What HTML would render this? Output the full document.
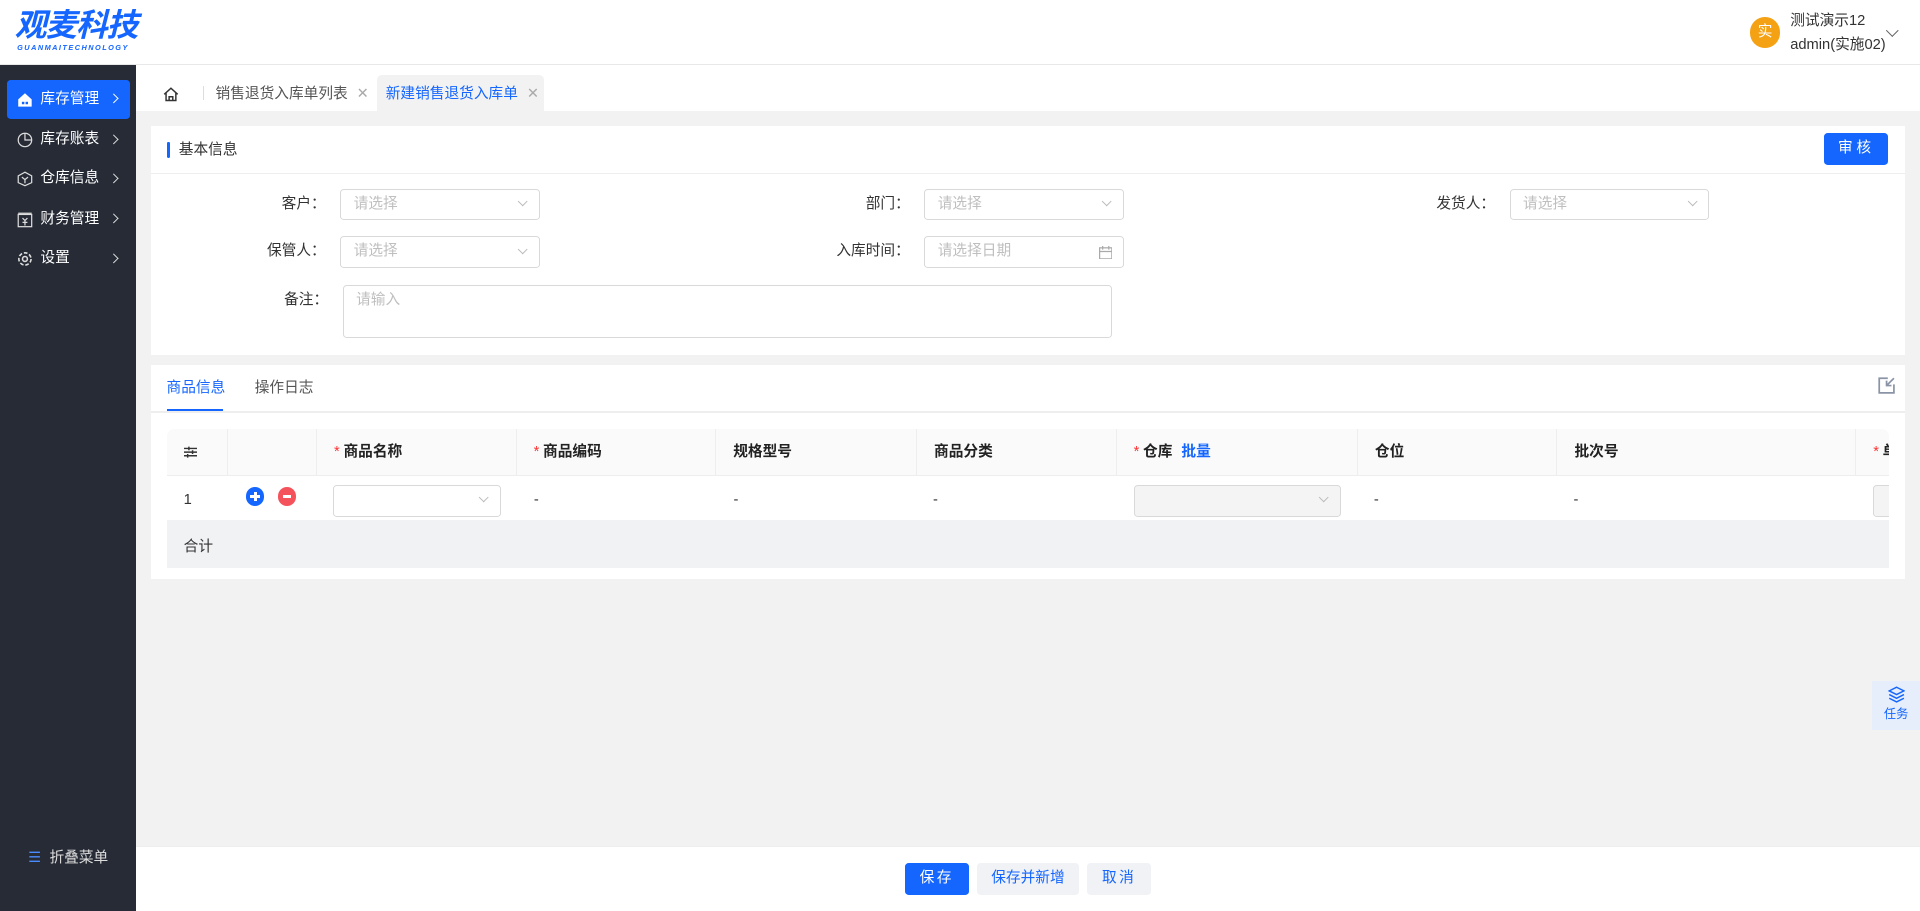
<!DOCTYPE html>
<html><head><meta charset="utf-8"><style>
*{box-sizing:border-box;margin:0;padding:0}
html,body{width:1920px;height:911px;overflow:hidden;background:#f2f2f2}
#w{zoom:1.22449;width:1568px;height:744px;position:relative;font-family:"Liberation Sans","Noto Sans CJK SC",sans-serif;font-size:12px;color:#333;line-height:1.2}
.a{position:absolute}
.hd{left:0;top:0;width:1568px;height:53px;background:#fff;border-bottom:1px solid #e8e8e8}
.sb{left:0;top:53px;width:111px;height:691px;background:#262b36}
.mi{position:absolute;left:6px;width:100px;height:32px;color:#fff;font-size:12px;line-height:32px;padding-left:27px}
.mi .ar{position:absolute;right:10px;top:13px;width:6px;height:6px;border-right:1px solid #ddd;border-top:1px solid #ddd;transform:rotate(45deg)}
.mi svg{position:absolute;left:8px;top:10px}
.card{background:#fff}
.inp{position:absolute;height:26px;border:1px solid #d9d9d9;border-radius:3px;background:#fff;color:#bfbfbf;padding-left:10px;line-height:24px}
.inp .v{position:absolute;right:10px;top:7px;width:6px;height:6px;border-right:1px solid #bbb;border-bottom:1px solid #bbb;transform:rotate(45deg)}
.lb{position:absolute;text-align:right;color:#333;line-height:26px}
.th{position:absolute;top:350px;height:38px;line-height:38px;font-weight:bold;color:#222;border-left:1px solid #eee;padding-left:14px}
.rs{color:#f33;font-weight:normal;margin-right:3px}
.btn{position:absolute;height:26px;line-height:26px;text-align:center;border-radius:3px;font-size:12px}
</style></head><body><div id="w">
<div class="a hd">
 <div class="a" style="left:12px;top:6px;color:#1466ff;font-size:26px;line-height:30px;font-style:italic;font-weight:bold;letter-spacing:-1px">观麦科技</div>
 <div class="a" style="left:14px;top:36px;color:#1466ff;font-size:6px;font-style:italic;font-weight:bold;letter-spacing:1.2px">GUANMAITECHNOLOGY</div>
 <div class="a" style="left:1429px;top:14px;width:25px;height:25px;border-radius:50%;background:#f5a114;color:#fff;text-align:center;line-height:25px;font-size:12px">实</div>
 <div class="a" style="left:1462px;top:11px;font-size:12px;color:#333">测试演示12</div>
 <div class="a" style="left:1462px;top:30px;font-size:12px;color:#333">admin(实施02)</div>
 <div class="a" style="left:1542px;top:21px;width:7px;height:7px;border-right:1px solid #666;border-bottom:1px solid #666;transform:rotate(45deg)"></div>
</div>
<div class="a sb">
 <div class="mi" style="top:12px;background:#1466ff;border-radius:3px"><svg width="13" height="13" viewBox="0 0 13 13"><path d="M1 6L6.5 1 12 6V12H1Z" fill="#fff"/><rect x="4" y="8" width="2" height="2" fill="#1466ff"/><rect x="7" y="8" width="2" height="2" fill="#1466ff"/></svg>库存管理<span class="ar" style="border-color:#fff"></span></div>
 <div class="mi" style="top:45px"><svg width="13" height="13" viewBox="0 0 13 13" fill="none" stroke="#ddd"><circle cx="6.5" cy="6.5" r="5.5"/><path d="M6.5 1V6.5H12"/></svg>库存账表<span class="ar"></span></div>
 <div class="mi" style="top:77px"><svg width="13" height="13" viewBox="0 0 13 13" fill="none" stroke="#ddd"><path d="M6.5 1L12 4V9.5L6.5 12 1 9.5V4Z"/><path d="M4 5L6.5 7 9 5M6.5 7V10"/></svg>仓库信息<span class="ar"></span></div>
 <div class="mi" style="top:110px"><svg width="13" height="13" viewBox="0 0 13 13" fill="none" stroke="#ddd"><rect x="1" y="2" width="11" height="10"/><path d="M1 1H12M4.5 5L6.5 7 8.5 5M6.5 7V11M4.5 8.5H8.5"/></svg>财务管理<span class="ar"></span></div>
 <div class="mi" style="top:142px"><svg width="13" height="13" viewBox="0 0 13 13" fill="none" stroke="#ddd" stroke-width="1.3"><circle cx="6.5" cy="6.5" r="2"/><circle cx="6.5" cy="6.5" r="5" stroke-dasharray="3 1.5"/></svg>设置<span class="ar"></span></div>
 <div class="a" style="left:23px;top:641px;color:#ddd;font-size:12px"><span style="color:#4a8bff">☰</span>&nbsp; 折叠菜单</div>
</div>
<div class="a" style="left:111px;top:53px;width:1457px;height:38px;background:#fff"></div>
<svg class="a" style="left:133px;top:71px" width="13" height="12" viewBox="0 0 13 12" fill="none" stroke="#333" stroke-width="1.2"><path d="M1 6L6.5 1 12 6M2.5 5V11H10.5V5M5 11V8H8V11"/></svg>
<div class="a" style="left:166px;top:70px;width:1px;height:12px;background:#ddd"></div>
<div class="a" style="left:176px;top:70px;color:#555">销售退货入库单列表 <span style="color:#aaa;margin-left:4px">✕</span></div>
<div class="a" style="left:308px;top:61px;width:136px;height:30px;background:#f2f2f2;border-radius:4px 4px 0 0"></div>
<div class="a" style="left:315px;top:70px;color:#1466ff">新建销售退货入库单 <span style="color:#aaa;margin-left:4px">✕</span></div>
<div class="a card" style="left:123px;top:103px;width:1433px;height:187px"></div>
<div class="a" style="left:123px;top:141px;width:1433px;height:1px;background:#eee"></div>
<div class="a" style="left:136px;top:116px;width:3px;height:13px;background:#1466ff;border-radius:1px"></div>
<div class="a" style="left:146px;top:116px;color:#333">基本信息</div>
<div class="btn" style="left:1490px;top:109px;width:52px;background:#1466ff;color:#fff;letter-spacing:3px">审核</div>
<div class="lb" style="left:180px;top:154px;width:86px">客户：</div><div class="inp" style="left:278px;top:154px;width:163px">请选择<span class="v"></span></div>
<div class="lb" style="left:650px;top:154px;width:93px">部门：</div><div class="inp" style="left:755px;top:154px;width:163px">请选择<span class="v"></span></div>
<div class="lb" style="left:1130px;top:154px;width:91px">发货人：</div><div class="inp" style="left:1233px;top:154px;width:163px">请选择<span class="v"></span></div>
<div class="lb" style="left:180px;top:193px;width:86px">保管人：</div><div class="inp" style="left:278px;top:193px;width:163px">请选择<span class="v"></span></div>
<div class="lb" style="left:650px;top:193px;width:93px">入库时间：</div><div class="inp" style="left:755px;top:193px;width:163px">请选择日期<svg style="position:absolute;right:9px;top:7px" width="11" height="11" viewBox="0 0 11 11" fill="none" stroke="#aaa"><rect x="0.5" y="1.5" width="10" height="9"/><path d="M0.5 4.5H10.5M3 0V3M8 0V3"/></svg></div>
<div class="lb" style="left:180px;top:233px;width:88px">备注：</div><div class="inp" style="left:280px;top:233px;width:628px;height:43px;line-height:24px">请输入</div>
<div class="a card" style="left:123px;top:298px;width:1433px;height:175px"></div>
<div class="a" style="left:136px;top:310px;color:#1466ff;font-size:12px">商品信息</div>
<div class="a" style="left:208px;top:310px;color:#555;font-size:12px">操作日志</div>
<div class="a" style="left:123px;top:336px;width:1433px;height:1px;background:#eee"></div>
<div class="a" style="left:136px;top:334px;width:46px;height:2px;background:#1466ff"></div>
<svg class="a" style="left:1534px;top:308px" width="14" height="14" viewBox="0 0 14 14" fill="none" stroke="#8a94a6" stroke-width="1.4"><path d="M8 1H1V13H13V6"/><path d="M13 1L7 7M7 3V7H11"/></svg>
<div class="a" style="left:136px;top:350px;width:1407px;height:38px;background:#fafafa;border-radius:6px 6px 0 0"></div>
<div class="a" style="left:136px;top:388px;width:1407px;height:1px;background:#eee"></div>
<div class="a" style="left:136px;top:425px;width:1407px;height:39px;background:#f1f2f4"></div>
<svg class="a" style="left:150px;top:364px" width="11" height="10" viewBox="0 0 11 10" stroke="#333" stroke-width="1.2"><path d="M0 2H11M0 5H11M0 8H11M4 0.5V3.5M7 3.5V6.5M3 6.5V9.5"/></svg>
<div class="th" style="left:185px;width:73px"></div>
<div class="th" style="left:258px;width:163px"><span class="rs">*</span>商品名称</div>
<div class="th" style="left:421px;width:163px"><span class="rs">*</span>商品编码</div>
<div class="th" style="left:584px;width:164px">规格型号</div>
<div class="th" style="left:748px;width:163px">商品分类</div>
<div class="th" style="left:911px;width:197px"><span class="rs">*</span>仓库 <span style="color:#1466ff;margin-left:4px">批量</span></div>
<div class="th" style="left:1108px;width:163px">仓位</div>
<div class="th" style="left:1271px;width:244px">批次号</div>
<div class="th" style="left:1515px;width:28px;overflow:hidden;white-space:nowrap"><span class="rs">*</span>单</div>
<div class="a" style="left:150px;top:402px">1</div>
<div class="a" style="left:201px;top:398px;width:15px;height:15px;border-radius:50%;background:#1466ff"><div style="position:absolute;left:3.5px;top:6.5px;width:8px;height:2px;background:#fff"></div><div style="position:absolute;left:6.5px;top:3.5px;width:2px;height:8px;background:#fff"></div></div>
<div class="a" style="left:227px;top:398px;width:15px;height:15px;border-radius:50%;background:#f5535b"><div style="position:absolute;left:4px;top:6.5px;width:7px;height:2px;background:#fff"></div></div>
<div class="inp" style="left:272px;top:396px;width:137px"><span class="v"></span></div>
<div class="a" style="left:436px;top:402px">-</div><div class="a" style="left:599px;top:402px">-</div><div class="a" style="left:762px;top:402px">-</div>
<div class="inp" style="left:926px;top:396px;width:169px;background:#f4f4f4"><span class="v"></span></div>
<div class="a" style="left:1122px;top:402px">-</div><div class="a" style="left:1285px;top:402px">-</div>
<div class="inp" style="left:1530px;top:396px;width:13px;background:#f4f4f4;border-right:none;border-radius:3px 0 0 3px"></div>
<div class="a" style="left:150px;top:440px">合计</div>
<div class="a" style="left:1529px;top:556px;width:39px;height:40px;background:#e6eefc;color:#1466ff;text-align:center;font-size:10px;padding-top:4px"><svg width="14" height="14" viewBox="0 0 14 14" fill="none" stroke="#1466ff" stroke-width="1.2"><path d="M7 1L13 4 7 7 1 4Z"/><path d="M1 7L7 10 13 7M1 10L7 13 13 10"/></svg><div>任务</div></div>
<div class="a" style="left:111px;top:691px;width:1457px;height:53px;background:#fff;border-top:1px solid #eee"></div>
<div class="btn" style="left:739px;top:705px;width:52px;background:#1466ff;color:#fff;letter-spacing:2px">保存</div>
<div class="btn" style="left:798px;top:705px;width:83px;background:#f0f2f5;color:#1466ff">保存并新增</div>
<div class="btn" style="left:888px;top:705px;width:52px;background:#f0f2f5;color:#1466ff;letter-spacing:2px">取消</div>
</div></body></html>
